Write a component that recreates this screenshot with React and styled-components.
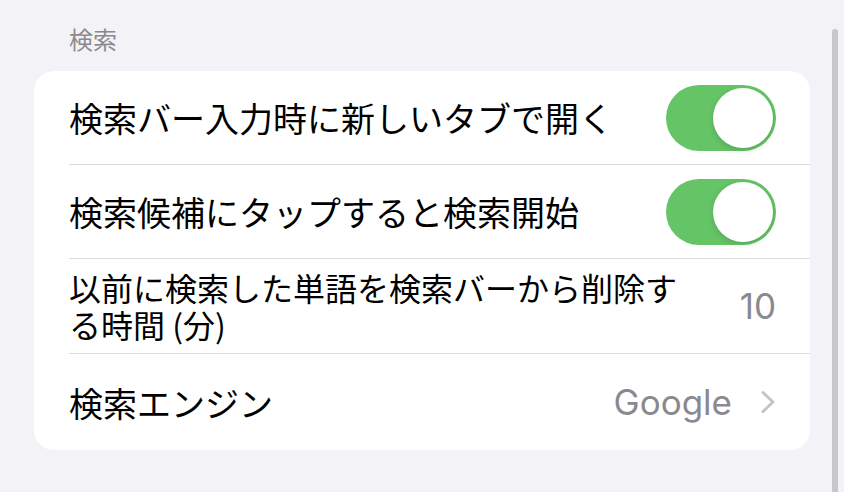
import React from "react";
import styled, { createGlobalStyle } from "styled-components";

const GlobalStyle = createGlobalStyle`
  html, body {
    margin: 0;
    padding: 0;
    background: #f2f2f7;
    font-family: "Noto Sans CJK JP", "Noto Sans", sans-serif;
  }
`;

const rows = [
  { label: "検索バー入力時に新しいタブで開く", toggle: true },
  { label: "検索候補にタップすると検索開始", toggle: true },
  { label: "以前に検索した単語を検索バーから削除する時間 (分)", value: "10", size: 32 },
  { label: "検索エンジン", value: "Google", chevron: true },
];

const App = () => {
  return (
    <>
      <GlobalStyle />
      <Page>
        <SectionTitle>検索</SectionTitle>
        <Card>
          {rows.map((row, i) => (
            <Row key={i} $last={i === rows.length - 1}>
              <Label $size={row.size}>{row.label}</Label>
              {row.toggle && (
                <Toggle>
                  <Knob />
                </Toggle>
              )}
              {row.value && <Value>{row.value}</Value>}
              {row.chevron && (
                <Chevron viewBox="0 0 16 24">
                  <path d="M3 2.5 L13 12 L3 21.5" fill="none" stroke="#c4c4c7" strokeWidth="3" strokeLinecap="round" strokeLinejoin="round" />
                </Chevron>
              )}
            </Row>
          ))}
        </Card>
        <ScrollBar />
      </Page>
    </>
  );
};

export default App;

const Page = styled.div`
  position: relative;
  width: 844px;
  height: 492px;
  padding: 22px 34px 0 34px;
  box-sizing: border-box;
  overflow: hidden;
`;

const SectionTitle = styled.div`
  padding-left: 35px;
  font-size: 24px;
  line-height: 34px;
  color: #8a8a8e;
  margin-bottom: 15px;
`;

const Card = styled.div`
  width: 776px;
  background: #ffffff;
  border-radius: 20px;
  padding-left: 35px;
  box-sizing: border-box;
`;

const Row = styled.div`
  display: flex;
  align-items: center;
  min-height: ${(p) => (p.$last ? "96px" : "93px")};
  padding-right: 34px;
  border-bottom: ${(p) => (p.$last ? "none" : "1.5px solid #dcdcdf")};
`;

const Label = styled.div`
  flex: 1;
  max-width: 620px;
  font-size: ${(p) => p.$size || 34}px;
  line-height: 37px;
  color: #000000;
  padding: 10px 0;
`;

const Toggle = styled.div`
  margin-left: auto;
  width: 110px;
  height: 66px;
  border-radius: 33px;
  background: #65c466;
  position: relative;
  flex-shrink: 0;
`;

const Knob = styled.div`
  position: absolute;
  right: 3px;
  top: 3px;
  width: 60px;
  height: 60px;
  border-radius: 50%;
  background: #ffffff;
  box-shadow: 0 2px 6px rgba(0, 0, 0, 0.15);
`;

const Value = styled.div`
  margin-left: auto;
  font-family: "Inter", "Noto Sans", sans-serif;
  font-size: 35px;
  color: #8a8a8e;
  flex-shrink: 0;
`;

const Chevron = styled.svg`
  width: 16px;
  height: 24px;
  margin-left: 28px;
  flex-shrink: 0;
`;

const ScrollBar = styled.div`
  position: absolute;
  left: 832px;
  top: 29px;
  width: 6px;
  height: 480px;
  border-radius: 3px;
  background: #c7c7cc;
`;
